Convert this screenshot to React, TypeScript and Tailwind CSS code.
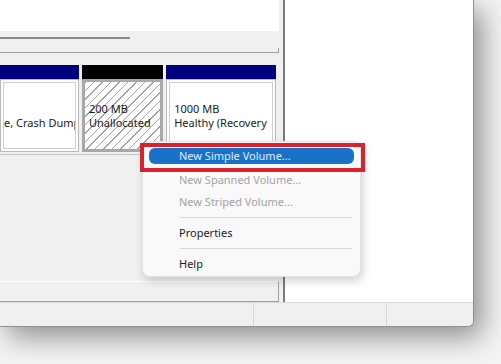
import React from 'react';

const sans = { fontFamily: '"Noto Sans", "Open Sans", sans-serif' };

function DiskColumn({
  width,
  bar,
  children,
  hatched,
  selected,
}: {
  width: string;
  bar: string;
  children: React.ReactNode;
  hatched?: boolean;
  selected?: boolean;
}) {
  return (
    <div className={`flex flex-col ${width}`}>
      <div className={`h-[14px] ${bar}`} />
      <div
        className={`h-[73px] overflow-hidden ${
          selected ? 'border-[3px] border-[#a8a8a8]' : 'border border-[#b9b9b9] bg-white p-[2px]'
        } ${
          hatched
            ? 'bg-[repeating-linear-gradient(135deg,#a2a2a2_0px,#a2a2a2_1px,#ffffff_1px,#ffffff_6px)]'
            : ''
        }`}
      >
        <div
          className={`flex h-full flex-col justify-center overflow-hidden ${
            selected ? 'pl-[4px]' : 'border border-[#cfcfcf] bg-white pl-[4px]'
          }`}
        >
          {children}
        </div>
      </div>
    </div>
  );
}

function MenuItem({ label, disabled }: { label: string; disabled?: boolean }) {
  return (
    <div
      className={`flex h-[22px] items-center pl-[36px] text-[11px] ${
        disabled ? 'text-[#a3a3a3]' : 'text-[#1b1b1b]'
      }`}
    >
      {label}
    </div>
  );
}

export default function App() {
  return (
    <div className="relative h-[364px] w-[501px] overflow-hidden bg-[#f4f4f4]" style={sans}>
      {/* window */}
      <div className="flex h-[327px] w-[474px] flex-col overflow-hidden rounded-br-[6px] border-b border-r border-[#8f8f8f] bg-[#f0f0f0] shadow-[8px_10px_28px_rgba(0,0,0,0.42)]">
        <div className="flex flex-1">
          {/* left pane */}
          <div className="flex w-[279px] flex-col">
            <div className="h-[31px] bg-white" />
            <div className="relative h-[22px] border-b border-[#a0a0a0] bg-[#f0f0f0]">
              <div className="mt-[6px] h-[2px] w-[130px] bg-[#8a8a8a]" />
              <div className="absolute bottom-0 right-0 h-[4px] w-px bg-[#a0a0a0]" />
            </div>
            <div className="h-[12px]" />
            <div className="flex gap-[3px] pr-[3px] text-[11px] leading-[14px] text-[#1a1a1a]">
              <DiskColumn width="w-[79px]" bar="bg-[#00007f]">
                <div className="whitespace-nowrap">&nbsp;</div>
                <div className="-ml-[4px] whitespace-nowrap">e, Crash Dump</div>
              </DiskColumn>
              <DiskColumn width="w-[82px]" bar="bg-black" hatched selected>
                <div className="whitespace-nowrap">200 MB</div>
                <div className="whitespace-nowrap">Unallocated</div>
              </DiskColumn>
              <DiskColumn width="w-[111px]" bar="bg-[#00007f]">
                <div className="whitespace-nowrap">1000 MB</div>
                <div className="whitespace-nowrap">Healthy (Recovery</div>
              </DiskColumn>
            </div>
            <div className="h-[3px] border-b border-[#c4c4c4]" />
            <div className="flex-1" />
            <div className="h-[21px] border-b border-r border-t border-[#a0a0a0] border-t-white" />
          </div>
          {/* splitter */}
          <div className="w-[4px] bg-[#f0f0f0]" />
          <div className="w-[2px] bg-[#7a7a7a]" />
          {/* right pane */}
          <div className="flex-1 bg-white" />
        </div>
        {/* status bar */}
        <div className="flex h-[24px] border-t border-[#dadada] bg-[#f0f0f0]">
          <div className="w-[253px]" />
          <div className="w-[133px] border-l border-[#d6d6d6]" />
          <div className="flex-1 border-l border-[#d6d6d6]" />
        </div>
      </div>

      {/* context menu */}
      <div className="absolute left-[142px] top-[141px] flex h-[136px] w-[219px] flex-col rounded-[8px] border border-[#e2e2e2] bg-[#f9f9f9] pt-[6px] shadow-[2px_4px_10px_rgba(0,0,0,0.18)]">
        <div className="mx-[6px] flex h-[16px] items-center rounded-[6px] bg-[#1a72c8] pl-[30px] text-[11px] text-[#dcefff]">
          New Simple Volume...
        </div>
        <div className="h-[5px]" />
        <MenuItem label="New Spanned Volume..." disabled />
        <MenuItem label="New Striped Volume..." disabled />
        <div className="my-[4px] ml-[37px] mr-[8px] h-px bg-[#d9d9d9]" />
        <MenuItem label="Properties" />
        <div className="my-[4px] ml-[37px] mr-[8px] h-px bg-[#d9d9d9]" />
        <MenuItem label="Help" />
      </div>

      {/* highlight annotation */}
      <div className="absolute left-[140px] top-[143px] h-[29px] w-[225px] border-4 border-[#d8232e]" />
    </div>
  );
}
